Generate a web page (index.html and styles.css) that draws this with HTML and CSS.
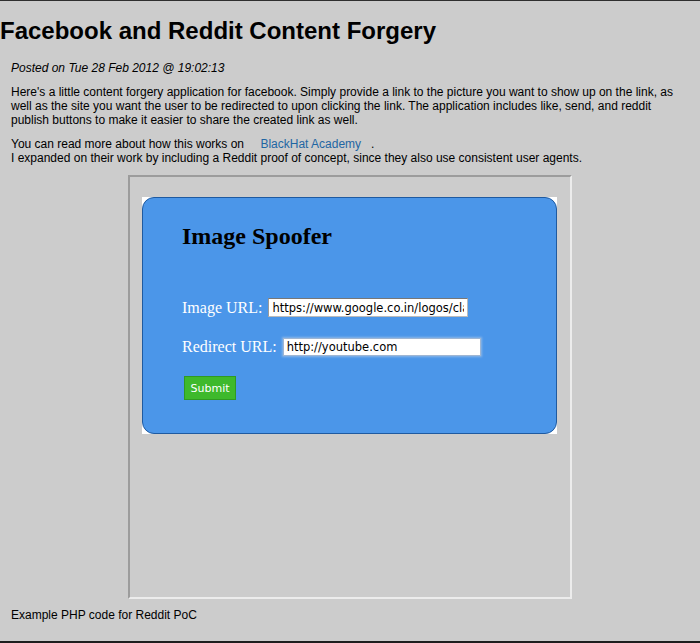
FILE: index.html
```html
<!DOCTYPE html>
<html>
<head>
<meta charset="utf-8">
<link rel="stylesheet" href="styles.css">
</head>
<body>
<div class="page">
  <h1 class="title">Facebook and Reddit Content Forgery</h1>
  <div class="content">
    <p class="posted">Posted on Tue 28 Feb 2012 @ 19:02:13</p>
    <p class="para">Here's a little content forgery application for facebook. Simply provide a link to the picture you want to show up on the link, as well as the site you want the user to be redirected to upon clicking the link. The application includes like, send, and reddit publish buttons to make it easier to share the created link as well.</p>
    <p class="para">You can read more about how this works on <a class="link" href="#">BlackHat Academy</a>.<br>I expanded on their work by including a Reddit proof of concept, since they also use consistent user agents.</p>
    <div class="frame">
      <div class="card-back">
        <div class="card">
          <h2 class="card-title">Image Spoofer</h2>
          <div class="row row-first">
            <label class="lbl">Image URL:</label>
            <input class="field" type="text" value="https://www.google.co.in/logos/classicplus.png">
          </div>
          <div class="row">
            <label class="lbl">Redirect URL:</label>
            <input class="field field-focus" type="text" value="http://youtube.com">
          </div>
          <button class="submit" type="button">Submit</button>
        </div>
      </div>
    </div>
    <p class="foot">Example PHP code for Reddit PoC</p>
  </div>
</div>
</body>
</html>
```

FILE: styles.css
```css
html, body {
  margin: 0;
  padding: 0;
  background: #cccccc;
}
.page {
  height: 643px;
  box-sizing: border-box;
  border-top: 1px solid #2e2e2e;
  border-bottom: 2px solid #1e1e1e;
  overflow: hidden;
  font-family: "Liberation Sans", Arial, sans-serif;
  color: #000;
}
.title {
  margin: 16px 0 0 0;
  font-size: 24px;
  line-height: 28px;
  font-weight: bold;
}
.content {
  padding: 0 11px;
}
.posted {
  margin: 16px 0 0 0;
  font-size: 12px;
  line-height: 14px;
  font-style: italic;
}
.para {
  margin: 10px 0 0 0;
  font-size: 12px;
  line-height: 14px;
}
.link {
  color: #1f66a3;
  text-decoration: none;
  margin: 0 10px 0 13px;
}
.frame {
  margin: 10px auto 0 auto;
  border: 2px solid;
  border-color: #9c9c9c #ececec #ececec #9c9c9c;
  padding: 20px 0 0 12px;
  box-sizing: content-box;
  width: 428px;
  height: 400px;
}
.card-back {
  width: 415px;
  height: 237px;
  background: #ffffff;
}
.card {
  box-sizing: border-box;
  width: 415px;
  height: 237px;
  background: #4b96e9;
  border: 1px solid #1f5aa0;
  border-radius: 12px;
  padding: 0 0 0 39px;
  font-family: "Liberation Serif", "Times New Roman", serif;
}
.card-title {
  margin: 0;
  padding-top: 24px;
  font-size: 24px;
  line-height: 28px;
  font-weight: bold;
  color: #000;
}
.row {
  display: flex;
  align-items: center;
  margin-top: 20px;
  height: 19px;
}
.row-first {
  margin-top: 48px;
}
.lbl {
  color: #ffffff;
  font-size: 16px;
  margin-right: 6px;
}
.field {
  box-sizing: border-box;
  width: 200px;
  height: 19px;
  padding: 0 3px;
  border: 1px solid;
  border-color: #777 #bbb #bbb #999;
  background: #fff;
  font-family: "DejaVu Sans", Verdana, sans-serif;
  font-size: 11.5px;
  color: #000;
  outline: none;
}
.field-focus {
  width: 198px;
  height: 18px;
  border-color: #9fb6d3;
  box-shadow: 0 0 2px 1px #8ab6e8;
}
.submit {
  display: block;
  margin: 20px 0 0 2px;
  width: 52px;
  height: 24px;
  padding: 0;
  background: #3eb92c;
  border: 1px solid #2f9a22;
  color: #fff;
  font-family: "DejaVu Sans", Verdana, sans-serif;
  font-size: 11px;
}
.foot {
  margin: 9px 0 0 0;
  font-size: 12px;
  line-height: 14px;
}
```
